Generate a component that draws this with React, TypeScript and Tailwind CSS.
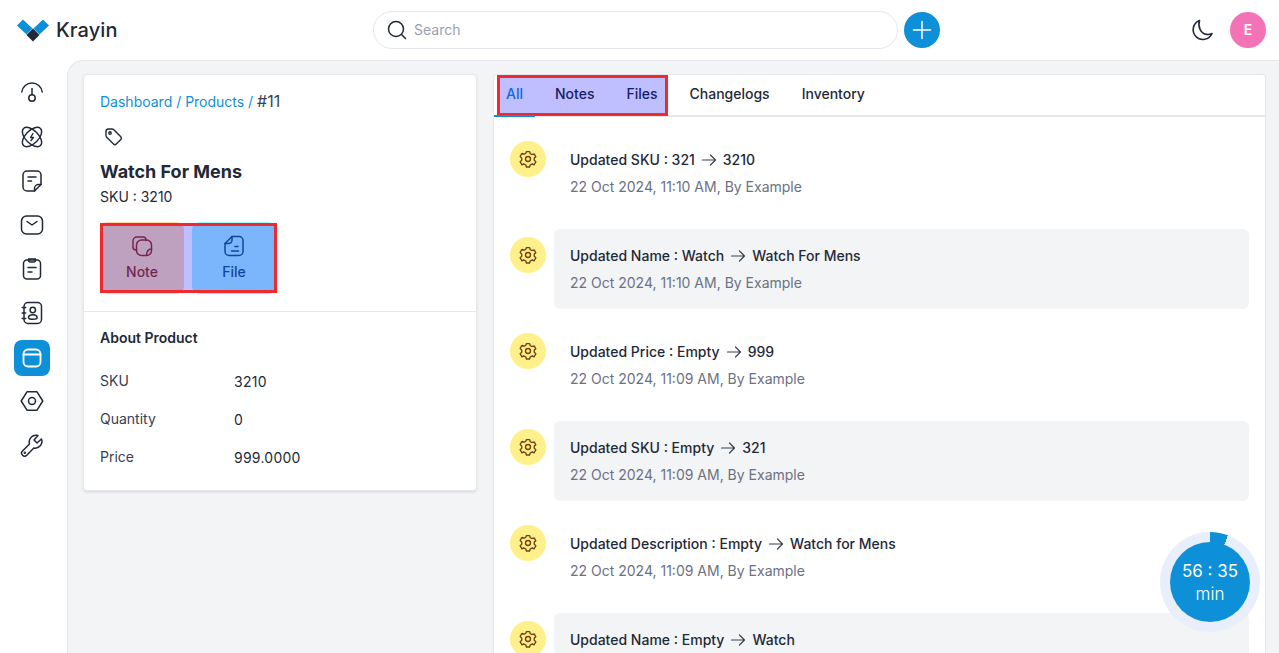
import React from "react";

const S = ({ children, size = 24, sw = 1.5 }: { children: React.ReactNode; size?: number; sw?: number }) => (
  <svg width={size} height={size} viewBox="0 0 24 24" fill="none" stroke="currentColor" strokeWidth={sw} strokeLinecap="round" strokeLinejoin="round">
    {children}
  </svg>
);

const navIcons: React.ReactNode[] = [
  <S key="a"><path d="M1.800 11C2.400 5.600 6.800 2 12 2s9.600 3.600 10.200 9" /><path d="M12 7.500v6" /><circle cx="12" cy="17" r="3.200" /></S>,
  <S key="b" sw={1.4}><ellipse cx="12" cy="12" rx="12" ry="6.500" transform="rotate(45 12 12)" /><ellipse cx="12" cy="12" rx="12" ry="6.500" transform="rotate(-45 12 12)" /><path d="M13 8.500 10.500 12.500h3L11 15.500" /></S>,
  <S key="c"><path d="M14.500 22H7a4 4 0 0 1-4-4V6a4 4 0 0 1 4-4h10a4 4 0 0 1 4 4v9.500L14.500 22Z" /><path d="M14.500 22v-2.500a4 4 0 0 1 4-4H21" /><path d="M8 8h8M8 12h3.500" /></S>,
  <S key="d"><rect x="1.500" y="3" width="21" height="18" rx="5" /><path d="M7 8.500 12 12l5-3.500" /></S>,
  <S key="e"><rect x="3.500" y="3" width="17" height="19" rx="3.500" /><path d="M8.500 3V2h7v1a2 2 0 0 1-2 2h-3a2 2 0 0 1-2-2Z" /><path d="M8 10.500h8M8 15h4" /></S>,
  <S key="f"><rect x="4" y="1.500" width="17.500" height="21" rx="4" /><circle cx="12.800" cy="9" r="2.700" /><path d="M8.500 16.800c0-2 2-3 4.300-3s4.300 1 4.300 3-8.600 2-8.600 0Z" /><path d="M2.200 6.500h3.500M2.200 12h3.500M2.200 17.500h3.500" /></S>,
  <S key="g" sw={1.8}><rect x="3.500" y="3.500" width="17" height="17" rx="4.500" /><path d="M3.500 8.500h17" /></S>,
  <S key="h"><path d="M7 2.800h10L22.800 12 17 21.200H7L1.200 12 7 2.800Z" /><circle cx="12" cy="12" r="3.500" /></S>,
  <S key="i"><path d="M21.500 6 17 10l-3-3 4-4.500A6.800 6.800 0 0 0 9.500 11L2.500 18a3 3 0 0 0 4.300 4.200l7-7.200A6.800 6.800 0 0 0 21.500 6Z" /><circle cx="4.800" cy="19.800" r="0.500" /></S>,
];

const rows: { title: string; from: string; to: string; date: string }[] = [
  { title: "Updated SKU :", from: "321", to: "3210", date: "22 Oct 2024, 11:10 AM, By Example" },
  { title: "Updated Name :", from: "Watch", to: "Watch For Mens", date: "22 Oct 2024, 11:10 AM, By Example" },
  { title: "Updated Price :", from: "Empty", to: "999", date: "22 Oct 2024, 11:09 AM, By Example" },
  { title: "Updated SKU :", from: "Empty", to: "321", date: "22 Oct 2024, 11:09 AM, By Example" },
  { title: "Updated Description :", from: "Empty", to: "Watch for Mens", date: "22 Oct 2024, 11:09 AM, By Example" },
  { title: "Updated Name :", from: "Empty", to: "Watch", date: "22 Oct 2024, 11:09 AM, By Example" },
];

const about: [string, string][] = [["SKU", "3210"], ["Quantity", "0"], ["Price", "999.0000"]];

export default function App() {
  return (
    <div className="relative flex h-[653px] w-[1279px] flex-col overflow-hidden bg-white text-[#1f2937] [font-family:Inter,'Liberation_Sans',sans-serif]">
      <header className="flex h-[60px] shrink-0 items-center justify-between pl-[17px] pr-[13px]">
        <div className="flex w-[356px] items-center gap-[7px]">
          <svg width="32" height="23" viewBox="0 0 32 23">
            <path d="M0 6.500 6 0.500 15.500 9.500 9.500 15.500Z" fill="#0e90d9" />
            <path d="M16.500 9.500 26 0.500 32 6.500 22.500 15.500Z" fill="#0e90d9" />
            <path d="M16 9.500 22.500 16 16 22.500 9.500 16Z" fill="#1f2937" />
          </svg>
          <span className="text-[20px] font-medium leading-none tracking-[0.1px] text-[#1f2937]">Krayin</span>
        </div>
        <div className="flex items-center gap-[6px]">
          <div className="flex h-[38px] w-[525px] items-center gap-[7px] rounded-full border border-gray-200 pl-[13px]">
            <svg width="20" height="20" viewBox="0 0 20 20" fill="none" stroke="#1f2937" strokeWidth="1.500" strokeLinecap="round"><circle cx="9" cy="9" r="7.500" /><path d="m14.500 14.500 4 4" /></svg>
            <span className="text-sm text-gray-400">Search</span>
          </div>
          <div className="flex h-9 w-9 items-center justify-center rounded-full bg-[#0e90d9]">
            <svg width="20" height="20" viewBox="0 0 20 20" fill="none" stroke="white" strokeWidth="1.500" strokeLinecap="round"><path d="M10 1.500v17M1.500 10h17" /></svg>
          </div>
        </div>
        <div className="ml-auto flex items-center gap-[16px]">
          <svg width="24" height="24" viewBox="0 0 24 24" fill="none" stroke="#1f2937" strokeWidth="1.600" strokeLinejoin="round"><path d="M9.500 2.500A9.800 9.800 0 1 0 22 15.500c-2 1-4 1.200-5.500.9C11 15.500 7.500 9 9.500 2.500Z" /></svg>
          <div className="flex h-9 w-9 items-center justify-center rounded-full bg-[#f472b6] text-sm font-semibold text-white">E</div>
        </div>
      </header>

      <div className="flex min-h-0 flex-1">
        <nav className="flex w-[67px] shrink-0 flex-col gap-2 pl-[14px] pt-[15px] text-[#1f2937]">
          {navIcons.map((icon, i) => (
            <div key={i} className={`flex h-9 w-9 items-center justify-center rounded-lg ${i === 6 ? "translate-y-px bg-[#0e90d9] text-white" : ""}`}>
              {icon}
            </div>
          ))}
        </nav>

        <main className="flex min-w-0 flex-1 gap-4 rounded-tl-2xl border-l border-t border-gray-200 bg-[#f3f4f6] pl-[15px] pr-[13px] pt-[13px]">
          <section className="h-[417px] w-[394px] shrink-0 rounded border border-gray-200 bg-white shadow-sm">
            <div className="flex flex-col px-4 pt-4">
              <div className="text-sm leading-[20px] text-[#0e90d9]">
                Dashboard / Products / <span className="text-base leading-[20px] text-[#374151]">#11</span>
              </div>
              <div className="ml-[4px] mt-[15px] h-5 text-[#1f2937]">
                <svg width="20" height="20" viewBox="0 0 20 20" fill="none" stroke="currentColor" strokeWidth="1.400" strokeLinejoin="round"><path d="M2 4.500A2.500 2.500 0 0 1 4.500 2h3.500c.7 0 1.300.3 1.800.7l7 7a2 2 0 0 1 0 2.800l-4.500 4.500a2 2 0 0 1-2.800 0l-7-7A2.500 2.500 0 0 1 2 8Z" /><circle cx="6" cy="6" r="1.200" /></svg>
              </div>
              <h1 className="mt-[11px] text-lg font-bold leading-[28px] text-[#1f2937]">Watch For Mens</h1>
              <div className="mt-[1px] text-sm leading-[20px] text-[#1f2937]">SKU : 3210</div>
              <div className="mt-[15px] flex gap-2">
                <div className="flex h-[72px] w-[84px] flex-col items-center justify-center gap-1 rounded-lg bg-[#fed7aa] text-[#9a3412]">
                  <S><path d="M16 6.500V6a3 3 0 0 0-3-3H7a4 4 0 0 0-4 4v6a3 3 0 0 0 3 3h.5" /><rect x="6.500" y="6" width="15" height="15.500" rx="5" /><path d="M21.500 15c-3 .2-5 2.500-5 6.500" /></S>
                  <span className="text-sm font-medium leading-[20px]">Note</span>
                </div>
                <div className="flex h-[72px] w-[84px] flex-col items-center justify-center gap-1 rounded-lg bg-[#a5f3fc] text-[#155e75]">
                  <S><path d="M10 2.500h7a4 4 0 0 1 4 4v11a4 4 0 0 1-4 4H7a4 4 0 0 1-4-4V9.500Z" /><path d="M3 9.500h3.500A3.500 3.500 0 0 0 10 6V2.500" /><path d="M13 12.500h3M9.500 17h7" /></S>
                  <span className="text-sm font-medium leading-[20px]">File</span>
                </div>
              </div>
            </div>
            <div className="mt-[17px] border-t border-gray-200 px-4 pt-4">
              <h2 className="text-sm font-semibold leading-[20px] text-[#1f2937]">About Product</h2>
              <div className="mt-[23px] flex flex-col gap-[18px]">
                {about.map(([k, v]) => (
                  <div key={k} className="flex h-5 text-sm leading-[20px]">
                    <span className="w-[134px] text-[#374151]">{k}</span>
                    <span className="pt-px tracking-[0.25px] text-[#1f2937]">{v}</span>
                  </div>
                ))}
              </div>
            </div>
          </section>

          <section className="min-w-0 flex-1 rounded-t border border-b-0 border-gray-200 bg-white">
            <div className="flex h-[42px] items-center gap-8 border-b-2 border-gray-200 pb-[2px] pl-[12px] text-sm font-medium leading-[20px] text-[#1f2937]">
              <span className="text-[#0e90d9]">All</span>
              <span>Notes</span>
              <span>Files</span>
              <span>Changelogs</span>
              <span>Inventory</span>
            </div>
            <div className="flex flex-col gap-4 px-4 pt-4">
              {rows.map((r, i) => (
                <div key={i} className="flex gap-2">
                  <div className="mt-2 flex h-9 w-9 shrink-0 items-center justify-center rounded-full bg-[#fef08a] text-[#713f12]">
                    <S size={20} sw={1.6}><path d="M10 3.200h4l.7 2.500 2.200 1.100 2.500-.9 2 3.500-1.900 1.800v2.400l1.900 1.800-2 3.500-2.500-.9-2.200 1.100-.7 2.500h-4l-.7-2.500-2.200-1.100-2.500.9-2-3.500 1.900-1.800v-2.400L2.600 8.900l2-3.500 2.500.9 2.200-1.100Z" /><circle cx="12" cy="12" r="3" /></S>
                  </div>
                  <div className={`h-20 flex-1 rounded-md px-4 pt-[17px] ${i % 2 === 1 ? "bg-[#f3f4f6]" : ""}`}>
                    <div className="flex items-center gap-[6px] text-sm font-medium leading-[20px] text-[#1f2937]">
                      <span>{r.title} {r.from}</span>
                      <svg width="16" height="16" viewBox="0 0 16 16" fill="none" stroke="#374151" strokeWidth="1.200" strokeLinecap="round" strokeLinejoin="round"><path d="M1.500 8h13M9.500 3l5 5-5 5" /></svg>
                      <span>{r.to}</span>
                    </div>
                    <div className="mt-[7px] text-sm leading-[20px] text-gray-500">{r.date}</div>
                  </div>
                </div>
              ))}
            </div>
          </section>
        </main>
      </div>

      {/* annotation overlays */}
      <div className="absolute left-[100px] top-[223px] h-[70px] w-[177px] border-[3px] border-[#ee2a2e] bg-[rgba(0,0,255,0.25)]" />
      <div className="absolute left-[497px] top-[75px] h-[41px] w-[171px] border-[3px] border-[#ee2a2e] bg-[rgba(0,0,255,0.25)]" />
      <div className="absolute left-[494px] top-[115px] h-[2px] w-[41px] bg-[#0e90d9]" />

      {/* floating timer */}
      <div className="absolute left-[1160px] top-[532px] flex h-[100px] w-[100px] items-center justify-center rounded-full bg-[conic-gradient(#0e90d9_0deg_21deg,#e8effa_21deg_360deg)]">
        <div className="flex h-20 w-20 flex-col items-center justify-center rounded-full bg-[#0e90d9] text-white">
          <span className="text-[17px] leading-[24px]">56 : 35</span>
          <span className="text-[17px] font-light leading-[22px]">min</span>
        </div>
      </div>
    </div>
  );
}
